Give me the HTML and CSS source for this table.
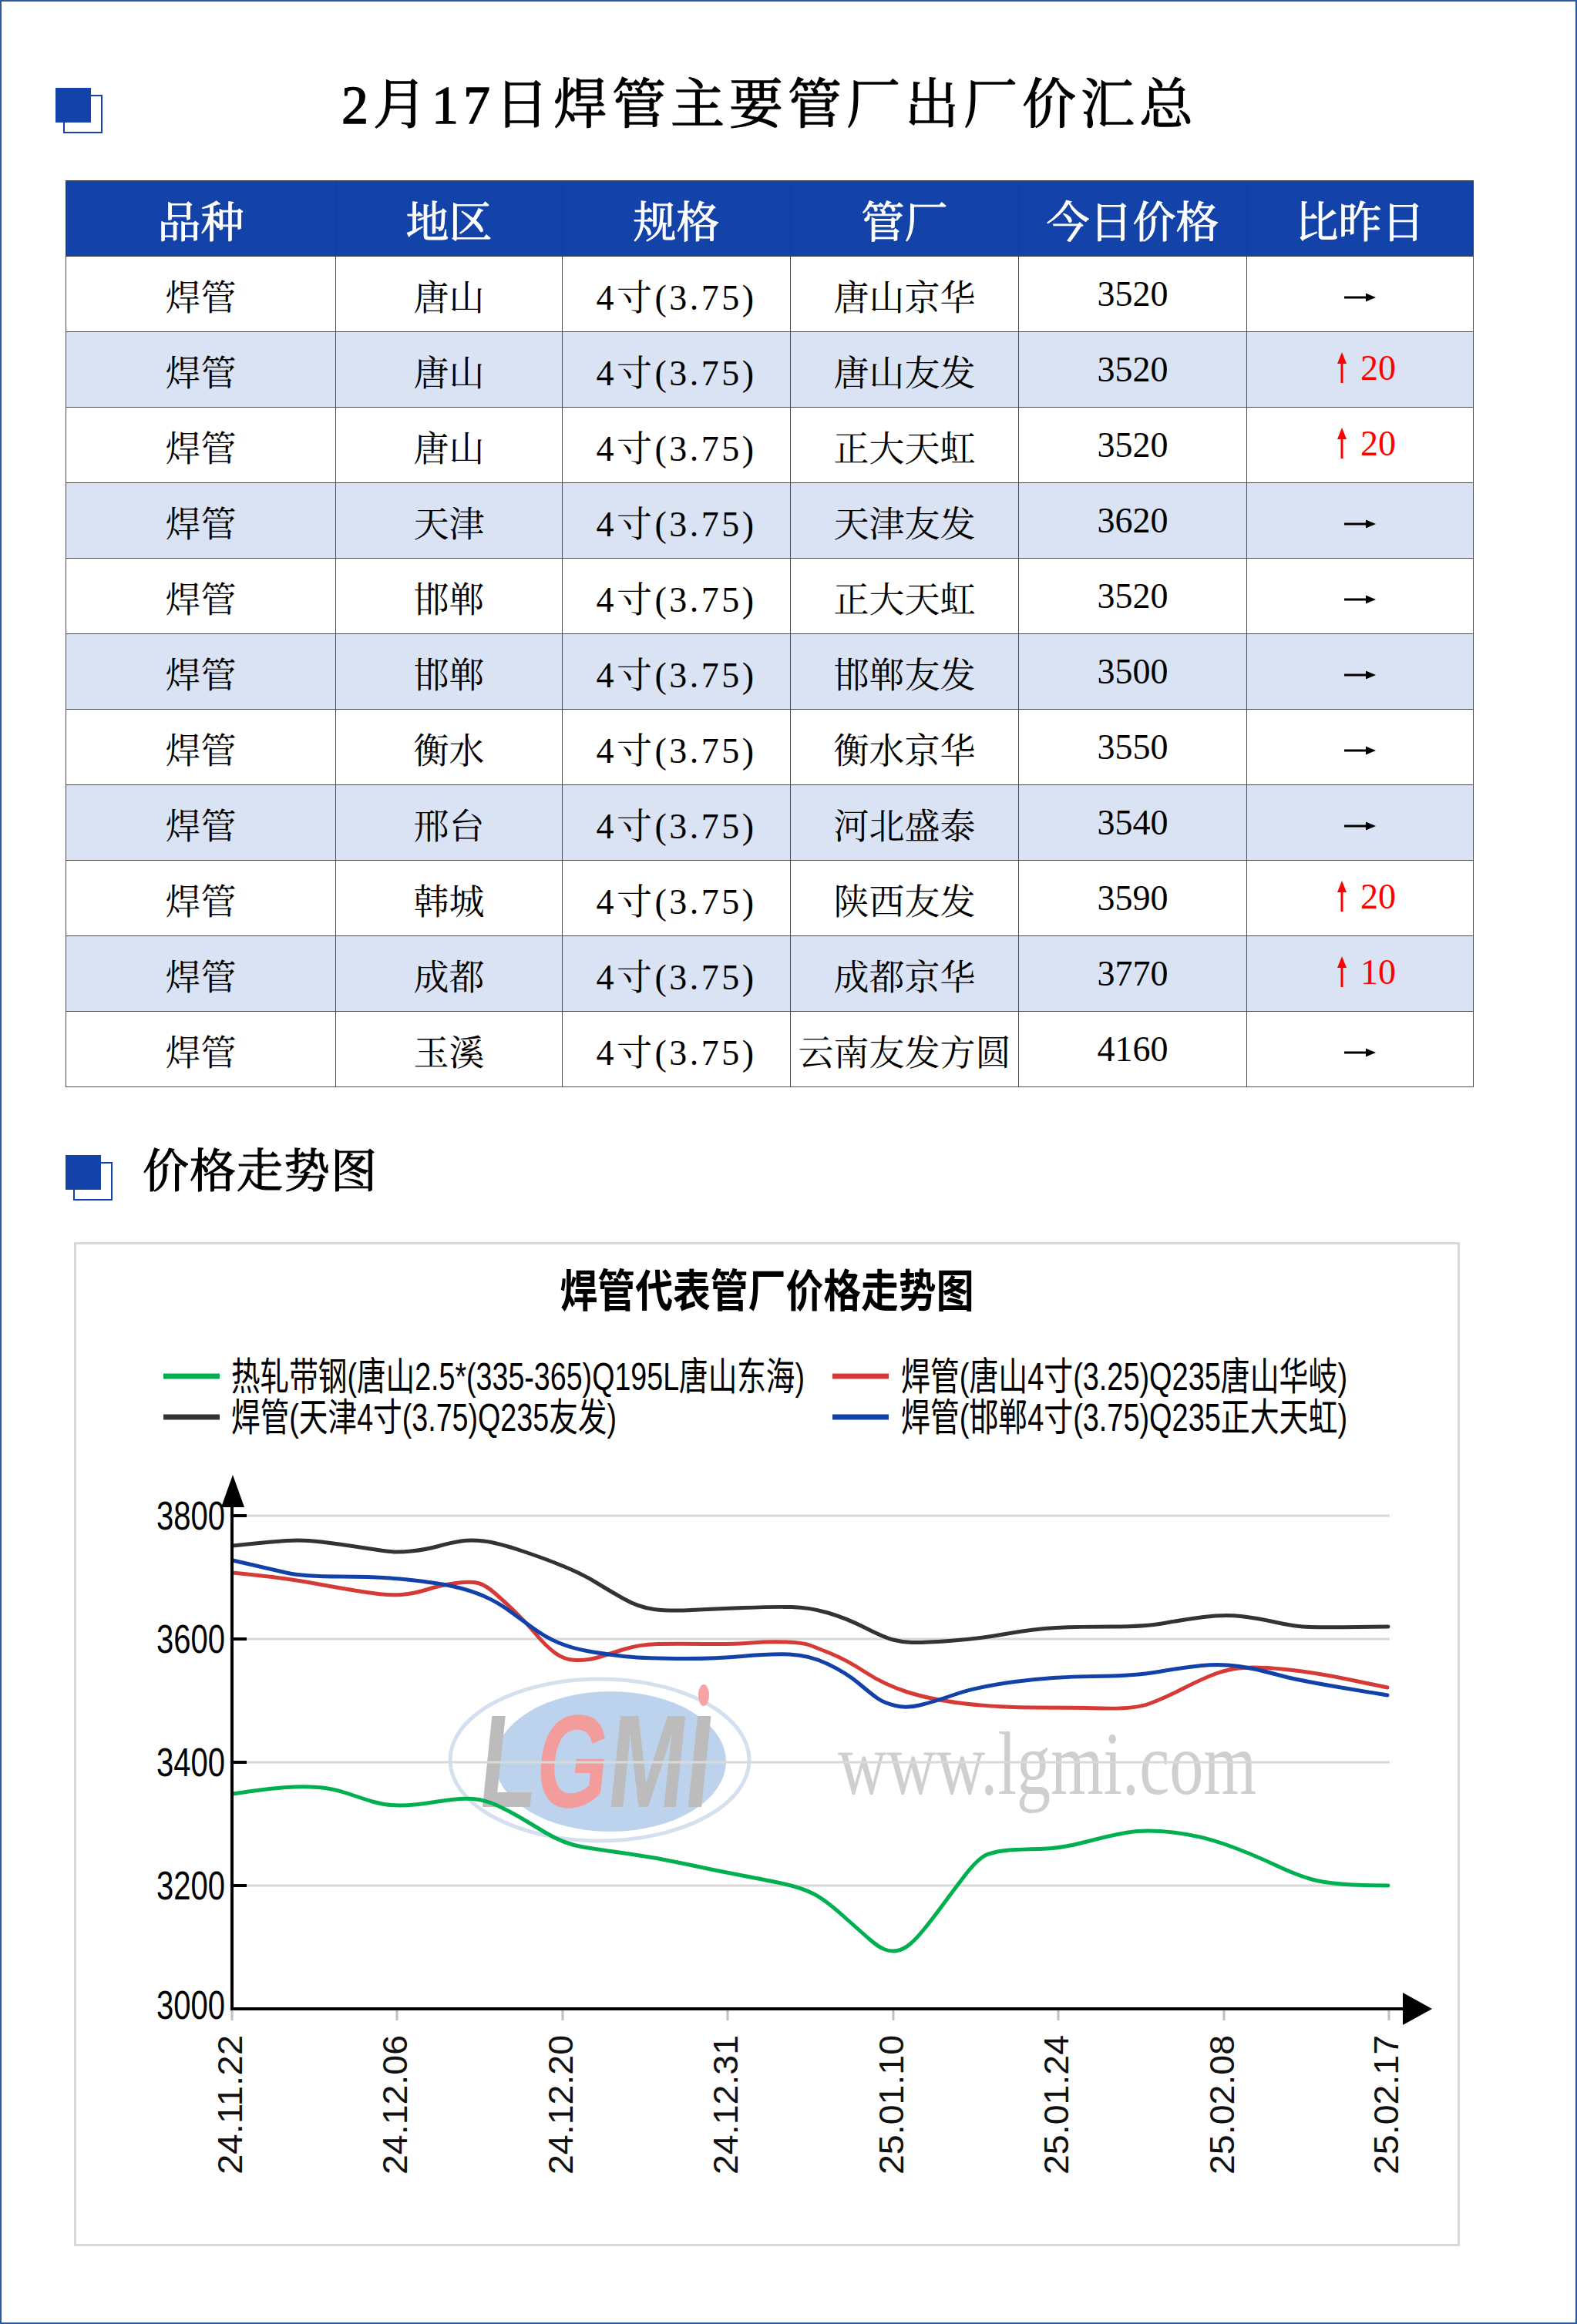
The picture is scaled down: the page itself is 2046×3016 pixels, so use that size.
FILE: index.html
```html
<!DOCTYPE html>
<html lang="zh-CN">
<head>
<meta charset="utf-8">
<title>2月17日焊管主要管厂出厂价汇总</title>
<link rel="stylesheet" href="styles.css">
</head>
<body>
<div class="page">
  <div class="head head1">
    <span class="mark"></span>
    <h1 class="title1">2月17日焊管主要管厂出厂价汇总</h1>
  </div>

  <table class="tbl">
    <colgroup>
      <col class="c1"><col class="c2"><col class="c3"><col class="c4"><col class="c5"><col class="c6">
    </colgroup>
    <thead>
      <tr><th>品种</th><th>地区</th><th>规格</th><th>管厂</th><th>今日价格</th><th>比昨日</th></tr>
    </thead>
    <tbody>
      <tr><td>焊管</td><td>唐山</td><td class="spec">4寸(3.75)</td><td>唐山京华</td><td>3520</td><td><svg class="arr-r" viewBox="0 0 41 14"><path class="arr-line" d="M0 7H31"/><path class="arr-head" d="M41 7L28 1.5V12.5Z"/></svg></td></tr>
      <tr class="alt"><td>焊管</td><td>唐山</td><td class="spec">4寸(3.75)</td><td>唐山友发</td><td>3520</td><td><span class="up"><svg class="arr-u" viewBox="0 0 14 40"><path class="up-line" d="M7 12V40"/><path class="up-head" d="M7 0L1 15H13Z"/></svg>20</span></td></tr>
      <tr><td>焊管</td><td>唐山</td><td class="spec">4寸(3.75)</td><td>正大天虹</td><td>3520</td><td><span class="up"><svg class="arr-u" viewBox="0 0 14 40"><path class="up-line" d="M7 12V40"/><path class="up-head" d="M7 0L1 15H13Z"/></svg>20</span></td></tr>
      <tr class="alt"><td>焊管</td><td>天津</td><td class="spec">4寸(3.75)</td><td>天津友发</td><td>3620</td><td><svg class="arr-r" viewBox="0 0 41 14"><path class="arr-line" d="M0 7H31"/><path class="arr-head" d="M41 7L28 1.5V12.5Z"/></svg></td></tr>
      <tr><td>焊管</td><td>邯郸</td><td class="spec">4寸(3.75)</td><td>正大天虹</td><td>3520</td><td><svg class="arr-r" viewBox="0 0 41 14"><path class="arr-line" d="M0 7H31"/><path class="arr-head" d="M41 7L28 1.5V12.5Z"/></svg></td></tr>
      <tr class="alt"><td>焊管</td><td>邯郸</td><td class="spec">4寸(3.75)</td><td>邯郸友发</td><td>3500</td><td><svg class="arr-r" viewBox="0 0 41 14"><path class="arr-line" d="M0 7H31"/><path class="arr-head" d="M41 7L28 1.5V12.5Z"/></svg></td></tr>
      <tr><td>焊管</td><td>衡水</td><td class="spec">4寸(3.75)</td><td>衡水京华</td><td>3550</td><td><svg class="arr-r" viewBox="0 0 41 14"><path class="arr-line" d="M0 7H31"/><path class="arr-head" d="M41 7L28 1.5V12.5Z"/></svg></td></tr>
      <tr class="alt"><td>焊管</td><td>邢台</td><td class="spec">4寸(3.75)</td><td>河北盛泰</td><td>3540</td><td><svg class="arr-r" viewBox="0 0 41 14"><path class="arr-line" d="M0 7H31"/><path class="arr-head" d="M41 7L28 1.5V12.5Z"/></svg></td></tr>
      <tr><td>焊管</td><td>韩城</td><td class="spec">4寸(3.75)</td><td>陕西友发</td><td>3590</td><td><span class="up"><svg class="arr-u" viewBox="0 0 14 40"><path class="up-line" d="M7 12V40"/><path class="up-head" d="M7 0L1 15H13Z"/></svg>20</span></td></tr>
      <tr class="alt"><td>焊管</td><td>成都</td><td class="spec">4寸(3.75)</td><td>成都京华</td><td>3770</td><td><span class="up"><svg class="arr-u" viewBox="0 0 14 40"><path class="up-line" d="M7 12V40"/><path class="up-head" d="M7 0L1 15H13Z"/></svg>10</span></td></tr>
      <tr><td>焊管</td><td>玉溪</td><td class="spec">4寸(3.75)</td><td>云南友发方圆</td><td>4160</td><td><svg class="arr-r" viewBox="0 0 41 14"><path class="arr-line" d="M0 7H31"/><path class="arr-head" d="M41 7L28 1.5V12.5Z"/></svg></td></tr>
    </tbody>
  </table>

  <div class="head head2">
    <span class="mark mark2"></span>
    <h2 class="title2">价格走势图</h2>
  </div>

  <div class="chart">
    <svg class="chart-svg" viewBox="99 1615 1792 1297" xmlns="http://www.w3.org/2000/svg">
      <text class="ct" transform="translate(995 1696) scale(1 1.18)" text-anchor="middle" textLength="537" lengthAdjust="spacingAndGlyphs">焊管代表管厂价格走势图</text>

      <path class="lg-green" d="M212 1786H285"/>
      <text class="lg" transform="translate(300 1804) scale(1 1.33)" textLength="744" lengthAdjust="spacingAndGlyphs">热轧带钢(唐山2.5*(335-365)Q195L唐山东海)</text>
      <path class="lg-red" d="M1080 1786H1153"/>
      <text class="lg" transform="translate(1169 1804) scale(1 1.33)" textLength="579" lengthAdjust="spacingAndGlyphs">焊管(唐山4寸(3.25)Q235唐山华岐)</text>
      <path class="lg-black" d="M212 1839H285"/>
      <text class="lg" transform="translate(300 1857) scale(1 1.33)" textLength="500" lengthAdjust="spacingAndGlyphs">焊管(天津4寸(3.75)Q235友发)</text>
      <path class="lg-blue" d="M1080 1839H1153"/>
      <text class="lg" transform="translate(1169 1857) scale(1 1.33)" textLength="579" lengthAdjust="spacingAndGlyphs">焊管(邯郸4寸(3.75)Q235正大天虹)</text>

      <g class="wmark">
        <ellipse class="wm-ring" cx="778" cy="2284" rx="194" ry="105"/>
        <ellipse class="wm-disc" cx="792" cy="2286" rx="150" ry="91"/>
        <text class="wm-logo" transform="translate(618 2345) skewX(-6) scale(1 1.43)" textLength="300" lengthAdjust="spacingAndGlyphs"><tspan class="wm-grey">L</tspan><tspan class="wm-pink">G</tspan><tspan class="wm-grey">MI</tspan></text>
        <ellipse class="wm-dot" cx="913" cy="2200" rx="7" ry="14"/>
        <text class="wm" transform="translate(1087 2328) scale(1 1.35)" textLength="543" lengthAdjust="spacingAndGlyphs">www.lgmi.com</text>
      </g>

      <path class="grid" d="M320 1967H1803M320 2127H1803M320 2287H1803M320 2447H1803"/>

      <path class="ln ln-green" d="M302 2328 L326 2324.5 Q350 2321 371.5 2319.5 Q393 2318 412.5 2319.5 Q432 2321 451 2327.5 Q470 2334 485 2338.5 Q500 2343 519 2343 Q538 2343 567.5 2338 Q597 2333 613.5 2334.5 Q630 2336 645 2343 Q660 2350 672 2357 Q684 2364 708 2378.5 Q732 2393 756.5 2397 Q781 2401 817 2406 Q853 2411 889.5 2419 Q926 2427 963 2434 Q1000 2441 1020 2445.5 Q1040 2450 1055 2457.5 Q1070 2465 1093.5 2486 Q1117 2507 1128.5 2517 Q1140 2527 1148 2530 Q1156 2533 1164 2531.5 Q1172 2530 1180 2523.5 Q1188 2517 1199 2503.5 Q1210 2490 1222.5 2473 Q1235 2456 1252.5 2433 Q1270 2410 1282.5 2406 Q1295 2402 1309 2401 Q1323 2400 1349.5 2399.5 Q1376 2399 1408 2390.5 Q1440 2382 1463.5 2378 Q1487 2374 1522 2378 Q1557 2382 1589.5 2393.5 Q1622 2405 1657 2421.5 Q1692 2438 1715.5 2442 Q1739 2446 1770 2446.5 L1801 2447"/>
      <path class="ln ln-black" d="M302 2006 L326 2003.5 Q350 2001 371.5 1999.5 Q393 1998 417 2001 Q441 2004 460.5 2007 Q480 2010 497 2012.5 Q514 2015 533.5 2013 Q553 2011 569 2006.5 Q585 2002 598 2000 Q611 1998 628 2000 Q645 2002 676.5 2012.5 Q708 2023 732 2033 Q756 2043 773 2053.5 Q790 2064 809.5 2075 Q829 2086 848.5 2088.5 Q868 2091 897 2089.5 Q926 2088 965 2086.5 Q1004 2085 1027 2085.5 Q1050 2086 1074 2093 Q1098 2100 1122.5 2112.5 Q1147 2125 1158.5 2128 Q1170 2131 1182.5 2131.5 Q1195 2132 1231.5 2129.5 Q1268 2127 1304.5 2120.5 Q1341 2114 1370 2112.5 Q1399 2111 1442.5 2111 Q1486 2111 1510.5 2106.5 Q1535 2102 1561.5 2098.5 Q1588 2095 1610 2097.5 Q1632 2100 1656 2105.5 Q1680 2111 1700 2111.5 Q1720 2112 1760.5 2111.5 L1801 2111"/>
      <path class="ln ln-red" d="M302 2041 L326 2043.5 Q350 2046 371.5 2049 Q393 2052 417 2056.5 Q441 2061 472.5 2066 Q504 2071 521 2069.5 Q538 2068 555 2062.5 Q572 2057 591.5 2054.5 Q611 2052 620.5 2054.5 Q630 2057 642.5 2068 Q655 2079 669.5 2093 Q684 2107 696 2121.5 Q708 2136 720 2145 Q732 2154 746.5 2154.5 Q761 2155 773.5 2151.5 Q786 2148 807.5 2141 Q829 2134 853.5 2133.5 Q878 2133 914 2133.5 Q950 2134 974.5 2132 Q999 2130 1020.5 2131 Q1042 2132 1049 2134.5 Q1056 2137 1077 2145.5 Q1098 2154 1122.5 2170 Q1147 2186 1176 2195.5 Q1205 2205 1248.5 2210.5 Q1292 2216 1340.5 2216 Q1389 2216 1430.5 2217 Q1472 2218 1491 2211 Q1510 2204 1534.5 2191.5 Q1559 2179 1576 2172.5 Q1593 2166 1612.5 2164.5 Q1632 2163 1668 2166.5 Q1704 2170 1752 2180 L1800 2190"/>
      <path class="ln ln-blue" d="M302 2025 L326 2030.5 Q350 2036 371.5 2041 Q393 2046 441.5 2046 Q490 2046 528.5 2050 Q567 2054 589 2059 Q611 2064 628 2071.5 Q645 2079 659.5 2089.5 Q674 2100 691 2112.5 Q708 2125 725 2132 Q742 2139 761.5 2142.5 Q781 2146 805 2149 Q829 2152 877.5 2152.5 Q926 2153 962.5 2149.5 Q999 2146 1024.5 2147 Q1050 2148 1074 2159.5 Q1098 2171 1114 2184.5 Q1130 2198 1138.5 2204 Q1147 2210 1161.5 2213.5 Q1176 2217 1193 2213 Q1210 2209 1239 2199 Q1268 2189 1316.5 2182.5 Q1365 2176 1418.5 2175.5 Q1472 2175 1503.5 2169.5 Q1535 2164 1559 2161.5 Q1583 2159 1607.5 2162.5 Q1632 2166 1656 2173 Q1680 2180 1740 2190 L1800 2200"/>

      <path class="xtick" d="M301 2609V2622M515 2609V2622M730 2609V2622M944 2609V2622M1159 2609V2622M1373 2609V2622M1588 2609V2622M1802 2609V2622"/>
      <path class="axis" d="M301 1950V2609M299 2607H1826"/>
      <path class="ytick" d="M301 1967H320M301 2127H320M301 2287H320M301 2447H320"/>
      <polygon class="arrowhead" points="302,1914 287,1956 317,1956"/>
      <polygon class="arrowhead" points="1858,2607 1820,2586 1820,2628"/>

      <text class="yl" transform="translate(292 1985) scale(1 1.3)" textLength="89" lengthAdjust="spacingAndGlyphs">3800</text>
      <text class="yl" transform="translate(292 2145) scale(1 1.3)" textLength="89" lengthAdjust="spacingAndGlyphs">3600</text>
      <text class="yl" transform="translate(292 2305) scale(1 1.3)" textLength="89" lengthAdjust="spacingAndGlyphs">3400</text>
      <text class="yl" transform="translate(292 2465) scale(1 1.3)" textLength="89" lengthAdjust="spacingAndGlyphs">3200</text>
      <text class="yl" transform="translate(292 2620) scale(1 1.3)" textLength="89" lengthAdjust="spacingAndGlyphs">3000</text>

      <text class="xl" transform="translate(314 2822) rotate(-90)" textLength="181" lengthAdjust="spacingAndGlyphs">24.11.22</text>
      <text class="xl" transform="translate(528 2822) rotate(-90)" textLength="181" lengthAdjust="spacingAndGlyphs">24.12.06</text>
      <text class="xl" transform="translate(743 2822) rotate(-90)" textLength="181" lengthAdjust="spacingAndGlyphs">24.12.20</text>
      <text class="xl" transform="translate(957 2822) rotate(-90)" textLength="181" lengthAdjust="spacingAndGlyphs">24.12.31</text>
      <text class="xl" transform="translate(1172 2822) rotate(-90)" textLength="181" lengthAdjust="spacingAndGlyphs">25.01.10</text>
      <text class="xl" transform="translate(1386 2822) rotate(-90)" textLength="181" lengthAdjust="spacingAndGlyphs">25.01.24</text>
      <text class="xl" transform="translate(1601 2822) rotate(-90)" textLength="181" lengthAdjust="spacingAndGlyphs">25.02.08</text>
      <text class="xl" transform="translate(1814 2822) rotate(-90)" textLength="181" lengthAdjust="spacingAndGlyphs">25.02.17</text>
    </svg>
  </div>
</div>
</body>
</html>
```

FILE: styles.css
```css
* {
  box-sizing: border-box;
  margin: 0;
  padding: 0;
}

body {
  margin: 0;
  background: #ffffff;
  color: #000000;
  font-family: "Liberation Serif", "Noto Serif CJK SC", "Noto Sans CJK SC", serif;
}

.page {
  width: 2046px;
  height: 3016px;
  border: 2px solid #2f58a3;
  overflow: hidden;
  background: #ffffff;
}

/* section headings */
.head {
  display: flex;
  align-items: flex-start;
  height: 80px;
}

.head1 {
  margin-top: 95px;
  padding-left: 70px;
}

.head2 {
  margin-top: 70px;
  padding-left: 83px;
}

.mark {
  position: relative;
  flex: none;
  width: 57px;
  height: 55px;
  margin-top: 17px;
}

.mark::before {
  content: "";
  position: absolute;
  left: 0;
  top: 0;
  width: 46px;
  height: 45px;
  background: #1343a8;
}

.mark::after {
  content: "";
  position: absolute;
  left: 10px;
  top: 9px;
  width: 47px;
  height: 46px;
  border: 2px solid #1343a8;
}

.mark2 {
  margin-top: 18px;
}

.title1 {
  margin-left: 314px;
  font-size: 70px;
  line-height: 80px;
  font-weight: normal;
  letter-spacing: 6px;
  white-space: nowrap;
  -webkit-text-stroke: 1.3px #000000;
}

.title2 {
  margin-left: 43px;
  font-size: 60px;
  line-height: 80px;
  font-weight: normal;
  letter-spacing: 1px;
  white-space: nowrap;
  -webkit-text-stroke: 1.2px #000000;
}

/* table */
.tbl {
  margin-top: 57px;
  margin-left: 83px;
  width: 1826px;
  border-collapse: collapse;
  table-layout: fixed;
}

.c1 { width: 350px; }
.c2 { width: 294px; }
.c3 { width: 296px; }
.c4 { width: 296px; }
.c5 { width: 296px; }
.c6 { width: 294px; }

.tbl th,
.tbl td {
  height: 98px;
  border: 1px solid #4d4d4d;
  text-align: center;
  vertical-align: middle;
  padding: 0;
  white-space: nowrap;
}

.tbl th {
  background: #1343a8;
  color: #ffffff;
  font-size: 56px;
  font-weight: normal;
  -webkit-text-stroke: 1px #ffffff;
  border-color: #3a3a3a;
}

.tbl td {
  font-size: 46px;
  background: #ffffff;
}

.tbl tr.alt td {
  background: #dae3f3;
}

.tbl td.spec {
  letter-spacing: 3.5px;
}

.arr-r {
  display: inline-block;
  width: 41px;
  height: 14px;
  vertical-align: middle;
}

.arr-line {
  stroke: #000000;
  stroke-width: 3;
  fill: none;
}

.arr-head {
  fill: #000000;
}

.up {
  display: inline-flex;
  align-items: center;
  color: #ff0000;
  margin-left: 16px;
}

.arr-u {
  width: 14px;
  height: 40px;
  margin-right: 17px;
}

.up-line {
  stroke: #ff0000;
  stroke-width: 3;
  fill: none;
}

.up-head {
  fill: #ff0000;
}

/* chart */
.chart {
  margin-top: 51px;
  margin-left: 94px;
  width: 1798px;
  height: 1303px;
  border: 3px solid #d9d9d9;
  background: #ffffff;
}

.chart-svg {
  display: block;
  width: 1792px;
  height: 1297px;
}

.ct {
  font-family: "Noto Sans CJK SC", sans-serif;
  font-weight: 700;
  font-size: 49px;
  fill: #000000;
}

.lg {
  font-family: "Liberation Sans", "Noto Sans CJK SC", sans-serif;
  font-size: 37.5px;
  fill: #000000;
}

.lg-green, .lg-red, .lg-black, .lg-blue {
  stroke-width: 7;
  fill: none;
}

.lg-green { stroke: #00b050; }
.lg-red { stroke: #d63a36; }
.lg-black { stroke: #333333; }
.lg-blue { stroke: #1242a9; }

.wm-ring {
  fill: none;
  stroke: #d5e0ee;
  stroke-width: 5;
}

.wm-disc {
  fill: #bdd2ec;
}

.wm-logo {
  font-family: "Liberation Sans", sans-serif;
  font-weight: 700;
  font-size: 120px;
}

.wm-grey { fill: #bcbcbc; }
.wm-pink { fill: #f39c9c; }

.wm-dot {
  fill: #f5a3a6;
}

.wm {
  font-family: "Liberation Serif", serif;
  font-size: 87px;
  fill: #cfcfcf;
}

.grid {
  stroke: #d9d9d9;
  stroke-width: 3;
  fill: none;
}

.ln {
  fill: none;
  stroke-width: 5;
  stroke-linejoin: round;
  stroke-linecap: round;
}

.ln-green { stroke: #00b050; }
.ln-black { stroke: #333333; }
.ln-red { stroke: #d63a36; }
.ln-blue { stroke: #1242a9; }

.axis {
  stroke: #000000;
  stroke-width: 4;
  fill: none;
}

.ytick {
  stroke: #000000;
  stroke-width: 4;
  fill: none;
}

.xtick {
  stroke: #bfbfbf;
  stroke-width: 3;
  fill: none;
}

.arrowhead {
  fill: #000000;
}

.yl {
  font-family: "Liberation Sans", sans-serif;
  font-size: 40px;
  text-anchor: end;
  fill: #000000;
}

.xl {
  font-family: "Liberation Sans", sans-serif;
  font-size: 45px;
  fill: #111111;
}
```
